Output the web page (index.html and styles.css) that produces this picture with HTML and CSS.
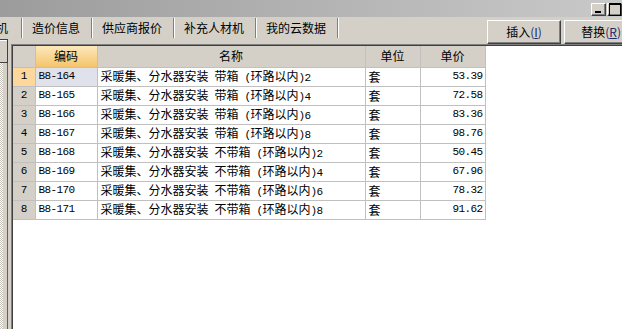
FILE: index.html
```html
<!DOCTYPE html>
<html lang="zh-CN">
<head>
<meta charset="utf-8">
<title>材机</title>
<link rel="stylesheet" href="styles.css">
</head>
<body>
<div class="window">
  <div class="titlebar">
    <div class="winbtns">
      <span class="wb min"></span>
      <span class="wb max"></span>
    </div>
  </div>
  <div class="toolbar">
    <div class="tabs">
      <span class="tab first">机</span>
      <span class="tab">造价信息</span>
      <span class="tab">供应商报价</span>
      <span class="tab">补充人材机</span>
      <span class="tab">我的云数据</span>
    </div>
    <div class="actions">
      <button class="btn">插入<span class="acc">(<u>I</u>)</span></button>
      <button class="btn">替换<span class="acc">(<u>R</u>)</span></button>
    </div>
  </div>
  <div class="main">
    <div class="side"><div class="sidebtn"></div></div>
    <div class="grid">
      <div class="grid-inner">
        <table class="tbl">
          <colgroup>
            <col class="c-no"><col class="c-code"><col class="c-name"><col class="c-unit"><col class="c-price">
          </colgroup>
          <thead>
            <tr>
              <th class="corner"></th>
              <th class="sel">编码</th>
              <th>名称</th>
              <th>单位</th>
              <th>单价</th>
            </tr>
          </thead>
          <tbody>
            <tr><td class="no cur">1</td><td class="code cur">B8-164</td><td class="name">采暖集、分水器安装<span class="a"> </span>带箱<span class="a"> (</span>环路以内<span class="a">)2</span></td><td class="unit">套</td><td class="price">53.39</td></tr>
            <tr><td class="no">2</td><td class="code">B8-165</td><td class="name">采暖集、分水器安装<span class="a"> </span>带箱<span class="a"> (</span>环路以内<span class="a">)4</span></td><td class="unit">套</td><td class="price">72.58</td></tr>
            <tr><td class="no">3</td><td class="code">B8-166</td><td class="name">采暖集、分水器安装<span class="a"> </span>带箱<span class="a"> (</span>环路以内<span class="a">)6</span></td><td class="unit">套</td><td class="price">83.36</td></tr>
            <tr><td class="no">4</td><td class="code">B8-167</td><td class="name">采暖集、分水器安装<span class="a"> </span>带箱<span class="a"> (</span>环路以内<span class="a">)8</span></td><td class="unit">套</td><td class="price">98.76</td></tr>
            <tr><td class="no">5</td><td class="code">B8-168</td><td class="name">采暖集、分水器安装<span class="a"> </span>不带箱<span class="a"> (</span>环路以内<span class="a">)2</span></td><td class="unit">套</td><td class="price">50.45</td></tr>
            <tr><td class="no">6</td><td class="code">B8-169</td><td class="name">采暖集、分水器安装<span class="a"> </span>不带箱<span class="a"> (</span>环路以内<span class="a">)4</span></td><td class="unit">套</td><td class="price">67.96</td></tr>
            <tr><td class="no">7</td><td class="code">B8-170</td><td class="name">采暖集、分水器安装<span class="a"> </span>不带箱<span class="a"> (</span>环路以内<span class="a">)6</span></td><td class="unit">套</td><td class="price">78.32</td></tr>
            <tr><td class="no">8</td><td class="code">B8-171</td><td class="name">采暖集、分水器安装<span class="a"> </span>不带箱<span class="a"> (</span>环路以内<span class="a">)8</span></td><td class="unit">套</td><td class="price">91.62</td></tr>
          </tbody>
        </table>
      </div>
    </div>
  </div>
</div>
</body>
</html>
```
FILE: styles.css
```css
* { box-sizing: border-box; }
html, body { margin: 0; padding: 0; }
body {
  width: 622px;
  height: 329px;
  overflow: hidden;
  background: #d4d0c8;
  font-family: "Noto Sans CJK SC", "Liberation Sans", sans-serif;
  font-size: 12px;
  color: #000;
}
.window {
  display: flex;
  flex-direction: column;
  height: 329px;
}
.titlebar {
  height: 17px;
  flex: none;
  background: linear-gradient(to right, #9c9c9c, #c9c9c9);
  display: flex;
  justify-content: flex-end;
  padding-top: 3px;
}
.winbtns { display: flex; gap: 1px; }
.wb {
  width: 15px;
  height: 13px;
  background: #d4d0c8;
  border: 1px solid;
  border-color: #fff #404040 #404040 #fff;
  box-shadow: inset -1px -1px 0 #808080;
  display: flex;
  align-items: center;
  justify-content: center;
}
.wb.min::after {
  content: "";
  width: 6px;
  height: 2px;
  background: #000;
  margin-top: 5px;
  margin-right: 2px;
}
.wb.max::after {
  content: "";
  width: 10px;
  height: 10px;
  border: 1px solid #000;
  border-top-width: 2px;
}
.toolbar {
  height: 27px;
  flex: none;
  display: flex;
  overflow: hidden;
}
.tabs {
  display: flex;
  height: 20px;
  margin-top: 1px;
  flex: none;
}
.tab {
  display: flex;
  align-items: center;
  padding: 0 11px 0 10px;
  border-right: 1px solid #808080;
  box-shadow: 1px 0 0 #fff;
  line-height: 1;
  white-space: nowrap;
}
.tab.first {
  margin-left: -4px;
  padding-left: 0;
  padding-right: 13px;
}
.actions {
  display: flex;
  gap: 3px;
  margin-left: 149px;
  padding-top: 3px;
  flex: none;
}
.btn {
  width: 74px;
  height: 24px;
  flex: none;
  background: #d4d0c8;
  border: 1px solid;
  border-color: #fff #404040 #404040 #fff;
  box-shadow: inset -1px -1px 0 #808080;
  font-family: "Noto Sans CJK SC", "Liberation Sans", sans-serif;
  font-size: 12px;
  color: #000;
  padding: 0;
  line-height: 1;
}
.acc { color: #1a2a6a; }
.main {
  flex: 1;
  display: flex;
  min-height: 0;
}
.side {
  width: 11px;
  flex: none;
  background:
    linear-gradient(to right, transparent 0 3px, #d4d0c8 3px 7px, #606060 7px 8px, #d4d0c8 8px 11px),
    repeating-conic-gradient(#ffffff 0 25%, #c8c4bc 0 50%) 0 0 / 2px 2px;
}
.sidebtn {
  width: 8px;
  height: 24px;
  margin-top: -5px;
  background: #d4d0c8;
  border: 1px solid #404040;
  border-left: none;
  box-shadow: inset 0 1px 0 #fff;
}
.grid {
  flex: 1;
  border-top: 1px solid #808080;
  border-left: 1px solid #808080;
  background: #fff;
}
.grid-inner {
  height: 100%;
  border-top: 1px solid #404040;
  border-left: 1px solid #404040;
}
.tbl {
  border-collapse: collapse;
  table-layout: fixed;
  width: 472px;
}
.c-no { width: 22px; }
.c-code { width: 62px; }
.c-name { width: 268px; }
.c-unit { width: 55px; }
.c-price { width: 65px; }
.tbl th {
  height: 21px;
  background: #d4d0c8;
  font-weight: normal;
  text-align: center;
  border: 1px solid #c0c0c0;
  border-top: none;
  padding: 0;
  line-height: 1;
  white-space: nowrap;
}
.tbl th.corner { border-left: none; }
.tbl th.sel {
  background: linear-gradient(#fce7bb, #f4c46c);
}
.tbl td {
  height: 19px;
  border: 1px solid #c0c0c0;
  padding: 0 3px;
  line-height: 1;
  white-space: nowrap;
  overflow: hidden;
}
.tbl td.no,
.tbl td.code,
.tbl td.price,
.a {
  font-family: "Liberation Mono", "DejaVu Sans Mono", monospace;
  font-size: 11px;
  letter-spacing: -0.6px;
}
.tbl td.no {
  background: #d4d0c8;
  text-align: center;
  border-left: none;
  padding: 0;
}
.tbl td.no.cur { background: #fdd89c; }
.tbl td.code.cur { background: #dfe1eb; }
.tbl td.price {
  text-align: right;
  padding-right: 2px;
}
.a { white-space: pre; }
```
